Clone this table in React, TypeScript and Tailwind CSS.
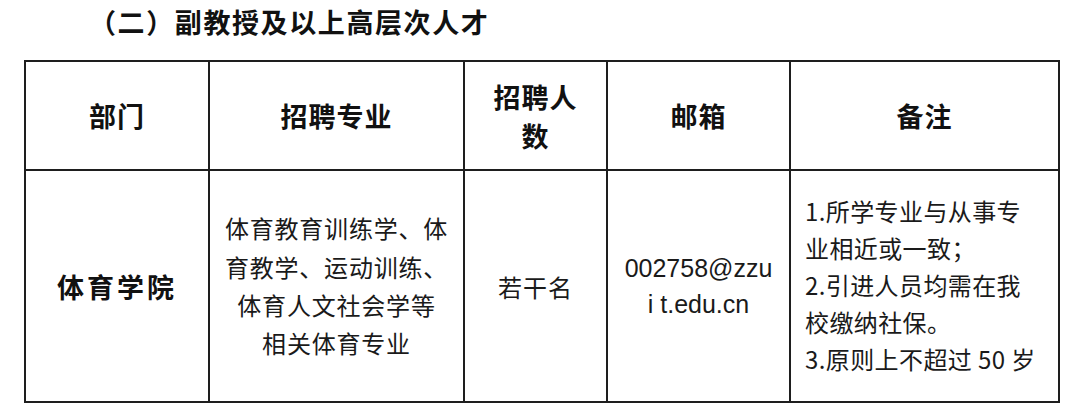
import React from "react";

const cjk = "font-['Noto_Sans_CJK_SC',sans-serif]";

const headers = [
  { key: "dept", lines: ["部门"] },
  { key: "major", lines: ["招聘专业"] },
  { key: "count", lines: ["招聘人", "数"] },
  { key: "mail", lines: ["邮箱"] },
  { key: "note", lines: ["备注"] },
];

const majorLines = ["体育教育训练学、体", "育教学、运动训练、", "体育人文社会学等", "相关体育专业"];

const noteLines = ["1.所学专业与从事专", "业相近或一致；", "2.引进人员均需在我", "校缴纳社保。", "3.原则上不超过 50 岁"];

export default function App() {
  return (
    <div className={`w-[1080px] h-[410px] bg-white text-[#111] ${cjk}`}>
      {/* Section title */}
      <div className="h-[60px] flex items-start pt-[5px] pl-[89px]">
        <h2 className="text-[27px] leading-[34px] font-bold tracking-[1.6px]">（二）副教授及以上高层次人才</h2>
      </div>

      {/* Table: dark background shows through the gaps as the grid lines */}
      <div className="ml-[24px] w-[1036px] grid grid-cols-[182px_253px_141px_181px_267px] grid-rows-[107px_230px] gap-[2px] p-[2px] bg-[#1e1e1e]">
        {headers.map((h) => (
          <div key={h.key} className="bg-white flex flex-col items-center justify-center">
            {h.lines.map((l) => (
              <span key={l} className="text-[27px] leading-[39px] font-bold tracking-[1px]">
                {l}
              </span>
            ))}
          </div>
        ))}

        <div className="bg-white flex items-center justify-center pt-[2px]">
          <span className="text-[27px] font-bold tracking-[3px]">体育学院</span>
        </div>

        <div className="bg-white flex flex-col items-center justify-center text-[#1a1a1a]">
          {majorLines.map((l) => (
            <span key={l} className="text-[24px] leading-[38.3px] tracking-[0.8px]">
              {l}
            </span>
          ))}
        </div>

        <div className="bg-white flex items-center justify-center text-[#1a1a1a] pt-[2px]">
          <span className="text-[24px] tracking-[1px]">若干名</span>
        </div>

        <div className="bg-white flex flex-col items-center justify-center text-[#1a1a1a] font-['Liberation_Sans',sans-serif]">
          <span className="text-[25px] leading-[36px]">002758@zzu</span>
          <span className="text-[25px] leading-[36px]">i t.edu.cn</span>
        </div>

        <div className="bg-white flex flex-col justify-center pl-[14px] text-[#1a1a1a] pb-[4px]">
          {noteLines.map((l) => (
            <span key={l} className="text-[24px] leading-[37px] tracking-[0.4px] whitespace-nowrap">
              {l}
            </span>
          ))}
        </div>
      </div>
    </div>
  );
}
